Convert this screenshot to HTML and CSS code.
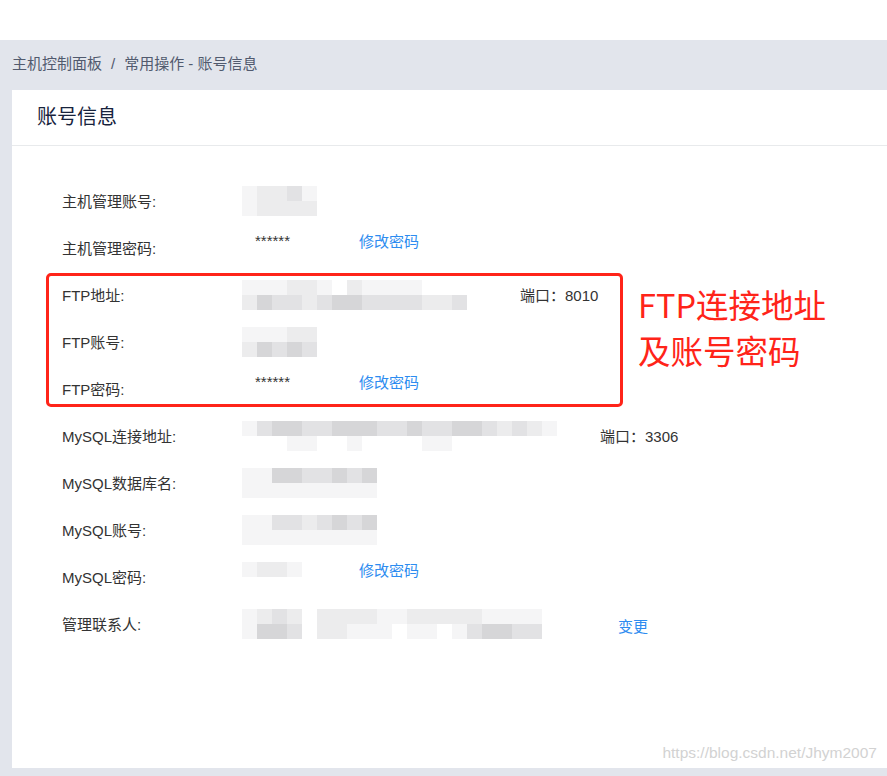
FILE: index.html
```html
<!DOCTYPE html>
<html lang="zh-CN">
<head>
    <meta charset="UTF-8">
    <meta name="viewport" content="width=device-width, initial-scale=1.0">
    <title>账号信息</title>
    <link rel="stylesheet" href="styles.css">
</head>
<body>
    <div class="topbar"></div>
    <div class="main">
        <div class="breadcrumb">主机控制面板<span class="sep">/</span>常用操作 - 账号信息</div>
        <div class="card">
            <div class="card-head">账号信息</div>
            <div class="rows">
                <div class="row">
                    <span class="label">主机管理账号:</span>
                    <span class="mosaic" data-cells="122310 122220"></span>
                </div>
                <div class="row">
                    <span class="label">主机管理密码:</span>
                    <span class="stars">******</span>
                    <a class="link up" href="#">修改密码</a>
                </div>
                <div class="group">
                    <div class="row">
                        <span class="label">FTP地址:</span>
                        <span class="value ftp-addr"><span class="mosaic" data-cells="111221021111000 243323443333223"></span></span>
                        <span class="port">端口：8010</span>
                    </div>
                    <div class="row">
                        <span class="label">FTP账号:</span>
                        <span class="mosaic" data-cells="111220 243430"></span>
                    </div>
                    <div class="row">
                        <span class="label">FTP密码:</span>
                        <span class="stars">******</span>
                        <a class="link up" href="#">修改密码</a>
                    </div>
                    <div class="note">FTP连接地址<br>及账号密码</div>
                </div>
                <div class="row">
                    <span class="label">MySQL连接地址:</span>
                    <span class="value sql-addr"><span class="mosaic" data-cells="134433444334334432321 000110010000110000000"></span></span>
                    <span class="port">端口：3306</span>
                </div>
                <div class="row">
                    <span class="label">MySQL数据库名:</span>
                    <span class="mosaic" data-cells="114433434 111111111"></span>
                </div>
                <div class="row">
                    <span class="label">MySQL账号:</span>
                    <span class="mosaic" data-cells="113323434 111111111"></span>
                </div>
                <div class="row">
                    <span class="label">MySQL密码:</span>
                    <span class="value short"><span class="mosaic up" data-cells="1221"></span></span>
                    <a class="link up" href="#">修改密码</a>
                </div>
                <div class="row">
                    <span class="label">管理联系人:</span>
                    <span class="mosaic" data-cells="1232 1443"></span>
                    <span class="mosaic wide" data-cells="222211222221111 221110110134433"></span>
                    <a class="link change" href="#">变更</a>
                </div>
            </div>
            <div class="watermark">https://blog.csdn.net/Jhym2007</div>
        </div>
    </div>
    <script>
        // blurred values: each digit is one grey cell, rows split by spaces
        document.querySelectorAll('.mosaic').forEach(function (box) {
            box.dataset.cells.split(' ').forEach(function (line) {
                const row = document.createElement('span');
                row.className = 'mrow';
                line.split('').forEach(function (d) {
                    const cell = document.createElement('span');
                    cell.className = 'cell c' + d;
                    row.appendChild(cell);
                });
                box.appendChild(row);
            });
        });
    </script>
</body>
</html>
```

FILE: styles.css
```css
body {
    margin: 0;
    font-family: "Liberation Sans", "Noto Sans CJK SC", sans-serif;
    font-size: 15px;
    color: #333;
    background: #fff;
}
.topbar {
    height: 40px;
    background: #fff;
}
.main {
    background: #e2e5ec;
    padding: 0 0 8px 12px;
}
.breadcrumb {
    height: 50px;
    line-height: 48px;
    color: #515a6e;
}
.breadcrumb .sep {
    margin: 0 9px;
}
.card {
    position: relative;
    background: #fff;
    height: 678px;
}
.card-head {
    height: 55px;
    line-height: 55px;
    padding-left: 25px;
    font-size: 20px;
    color: #17233d;
    border-bottom: 1px solid #e8eaec;
}
.rows {
    padding: 31px 0 0 50px;
}
.row {
    display: flex;
    align-items: center;
    height: 47px;
}
.label {
    width: 180px;
    flex-shrink: 0;
    color: #333;
}
.stars {
    width: 104px;
    padding-left: 13px;
    margin-bottom: 14px;
    color: #333;
}
.link {
    color: #2d8cf0;
    text-decoration: none;
}
.link.up {
    margin-bottom: 14px;
}
.link.change {
    margin-left: 76px;
    margin-bottom: -3px;
}
.value.ftp-addr {
    width: 278px;
}
.value.sql-addr {
    width: 358px;
}
.value.short {
    width: 117px;
}
.port {
    color: #333;
}
.mosaic {
    display: flex;
    flex-direction: column;
}
.mosaic.up {
    margin-bottom: 14px;
}
.mosaic.wide {
    margin-left: 15px;
}
.mrow {
    display: flex;
}
.cell {
    width: 15px;
    height: 15px;
}
.c0 { background: transparent; }
.c1 { background: #f5f5f6; }
.c2 { background: #ececed; }
.c3 { background: #e2e2e4; }
.c4 { background: #d6d6d8; }
.group {
    position: relative;
}
.group::before {
    content: "";
    position: absolute;
    left: -16px;
    top: 2px;
    width: 571px;
    height: 128px;
    border: 3px solid #ff2419;
    border-radius: 5px;
}
.note {
    position: absolute;
    left: 576px;
    top: 10px;
    font-family: "Noto Sans CJK SC", sans-serif;
    font-size: 32.5px;
    line-height: 46px;
    color: #ff2419;
}
.watermark {
    position: absolute;
    right: 10px;
    bottom: 6px;
    font-size: 15.5px;
    color: #d2d2d2;
}
```
